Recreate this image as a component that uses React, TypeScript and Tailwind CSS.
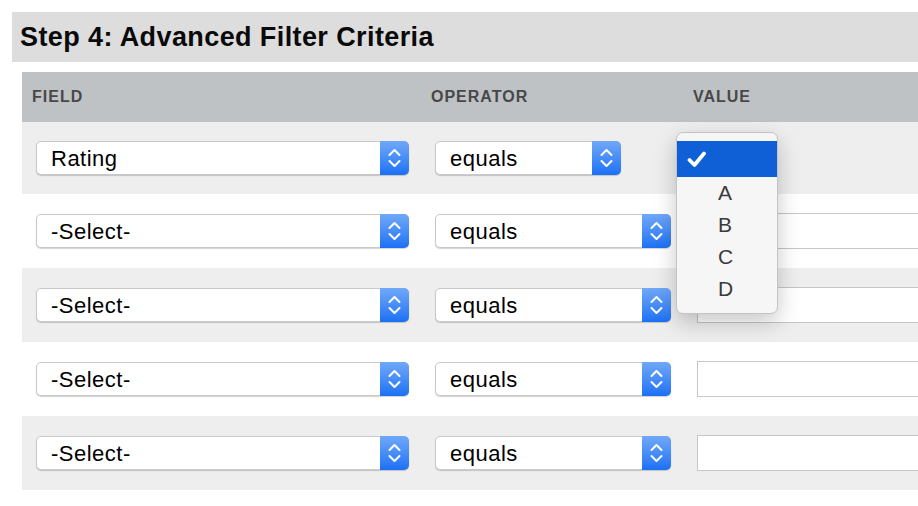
import React from 'react'

const font = { fontFamily: '"Liberation Sans", Arial, sans-serif' }

function Chevrons() {
  return (
    <svg width="13" height="20" viewBox="0 0 13 20" fill="none">
      <path d="M1.5 7 L6.5 2 L11.5 7" stroke="white" strokeWidth="2" strokeLinecap="round" strokeLinejoin="round" />
      <path d="M1.5 13 L6.5 18 L11.5 13" stroke="white" strokeWidth="2" strokeLinecap="round" strokeLinejoin="round" />
    </svg>
  )
}

function FakeSelect({ label, width }: { label: string; width: string }) {
  return (
    <div
      className={`relative flex h-[34px] items-center rounded-[5px] border border-[#c9c9c9] bg-white shadow-[0_1px_1px_rgba(0,0,0,0.18)] ${width}`}
    >
      <span className="pl-[14px] text-[22px] tracking-[0.5px] text-black">{label}</span>
      <div className="absolute -top-px -right-px -bottom-px flex w-[29px] items-center justify-center rounded-r-[5px] bg-gradient-to-b from-[#6fa8f8] to-[#1a70f5]">
        <Chevrons />
      </div>
    </div>
  )
}

function ValueMenu() {
  const items = ['A', 'B', 'C', 'D']
  return (
    <div className="absolute left-[-7px] top-[10px] z-10 w-[102px] rounded-[7px] border border-[#c4c4c4] bg-[#f6f6f6] py-[8px] shadow-[0_8px_22px_rgba(0,0,0,0.22)]">
      <div className="flex h-[36px] items-center bg-[#0f5fd6] pl-[10px]">
        <svg width="20" height="17" viewBox="0 0 20 17" fill="none">
          <path d="M2.5 9 L7.5 14 L17 2.5" stroke="white" strokeWidth="3.8" strokeLinecap="round" strokeLinejoin="round" />
        </svg>
      </div>
      {items.map((item) => (
        <div key={item} className="flex h-[32px] items-center pl-[41px] text-[21px] text-[#3b3b3b]">
          {item}
        </div>
      ))}
    </div>
  )
}

export default function App() {
  const rows = [
    { field: 'Rating', open: true },
    { field: '-Select-', open: false },
    { field: '-Select-', open: false },
    { field: '-Select-', open: false },
    { field: '-Select-', open: false },
  ]

  return (
    <div className="h-[506px] w-[918px] overflow-hidden bg-white pt-[12px] pl-[12px]" style={font}>
      {/* Title */}
      <div className="flex h-[50px] w-[1000px] items-center bg-[#dddddd] pl-[8px]">
        <h1 className="text-[27px] font-bold tracking-[0.4px] text-[#0a0a0a]">Step 4: Advanced Filter Criteria</h1>
      </div>

      {/* Table */}
      <div className="mt-[10px] ml-[10px] w-[1000px]">
        <div className="grid h-[50px] grid-cols-[399px_262px_1fr] items-center bg-[#bec2c5] text-[16px] font-bold tracking-[1px] text-[#484848]">
          <div className="pl-[10px]">FIELD</div>
          <div className="pl-[10px]">OPERATOR</div>
          <div className="pl-[10px]">VALUE</div>
        </div>

        {rows.map((row, i) => (
          <div
            key={i}
            className={`grid grid-cols-[399px_262px_1fr] items-center ${i === 0 ? 'h-[72px]' : 'h-[74px]'} ${i % 2 === 0 ? 'bg-[#eeeeee]' : 'bg-white'}`}
          >
            <div className="pl-[14px]">
              <FakeSelect label={row.field} width="w-[373px]" />
            </div>
            <div className="pl-[14px]">
              <FakeSelect label="equals" width={row.open ? 'w-[186px]' : 'w-[236px]'} />
            </div>
            <div className="relative h-full pl-[14px]">
              {row.open ? (
                <ValueMenu />
              ) : (
                <div className="flex h-full items-center">
                  <div className="h-[36px] w-[400px] border border-[#c6c6c6] bg-white" />
                </div>
              )}
            </div>
          </div>
        ))}
      </div>
    </div>
  )
}
